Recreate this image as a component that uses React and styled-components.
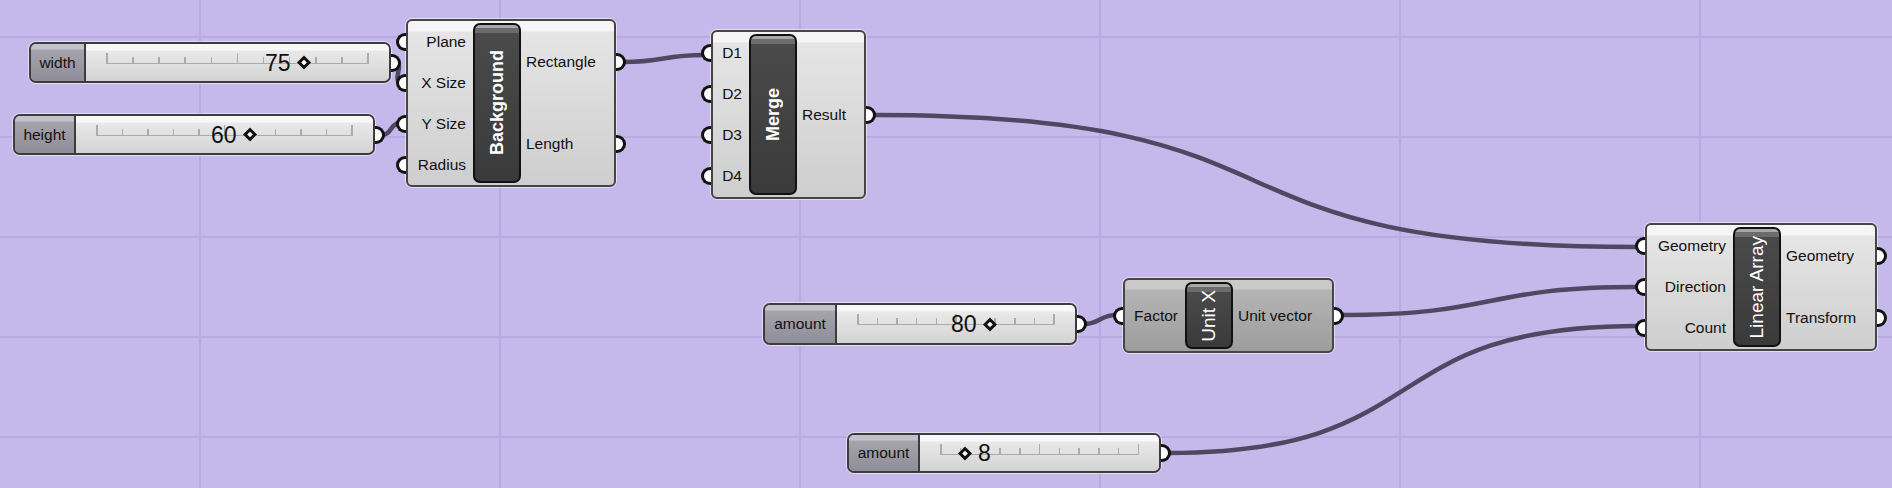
import React, { Fragment } from 'react';
import styled, { createGlobalStyle, css } from 'styled-components';

const GlobalStyle = createGlobalStyle`
  html, body {
    margin: 0;
    padding: 0;
    background: #c4b9ea;
  }

  body {
    font-family: "Liberation Sans", Arial, sans-serif;
  }

  * {
    box-sizing: border-box;
  }
`;

const Canvas = styled.div`
  position: relative;
  width: 1892px;
  height: 488px;
  overflow: hidden;
  background-color: #c4b9ea;
  background-image: linear-gradient(to right, #b7abdf 2px, transparent 2px),
    linear-gradient(to bottom, #b7abdf 2px, transparent 2px);
  background-size: 300px 100%, 100% 100px;
  background-position: 199px 0, 0 36px;
`;

const Wires = styled.svg`
  position: absolute;
  inset: 0;
  width: 100%;
  height: 100%;

  path {
    fill: none;
    stroke: #4e4862;
    stroke-width: 4.5;
    stroke-linecap: round;
  }
`;

const Grip = styled.span`
  position: absolute;
  top: 50%;
  width: 10px;
  height: 18px;
  margin-top: -9px;
  background: #fff;
  border: 3.5px solid #111;

  ${p =>
    p.$side === 'left'
      ? css`
          left: -12px;
          border-right: none;
          border-radius: 10px 0 0 10px;
        `
      : css`
          right: -12px;
          border-left: none;
          border-radius: 0 10px 10px 0;
        `}
`;

/* ---------- number sliders ---------- */

const SliderBox = styled.div`
  position: absolute;
  left: ${p => p.$x}px;
  top: ${p => p.$y}px;
  width: ${p => p.$w}px;
  height: ${p => p.$h}px;
  display: flex;
  border: 2px solid #3c3c3c;
  border-radius: 7px;
  box-shadow: 0 0 0 1px rgba(255, 255, 255, 0.5);
`;

const SliderLabel = styled.div`
  position: relative;
  width: ${p => p.$w}px;
  display: flex;
  align-items: center;
  justify-content: center;
  border-right: 2px solid #3c3c3c;
  border-radius: 5px 0 0 5px;
  background: linear-gradient(#c3c2ca 0, #c3c2ca 5px, #a5a4ad 6px, #8f8e98 100%);
  color: #111;
  font-size: 15.5px;
`;

const SliderBody = styled.div`
  position: relative;
  flex: 1;
  border-radius: 0 5px 5px 0;
  background: linear-gradient(#f8f8f8 0, #f8f8f8 6px, #e9e9e9 7px, #d3d3d3 100%);
`;

const Track = styled.div`
  position: absolute;
  left: 20px;
  right: 20px;
  top: 9px;
  height: 11px;
  display: flex;
  justify-content: space-between;
  align-items: flex-end;
  border-bottom: 1.5px solid #ababab;
`;

const Tick = styled.span`
  width: 1.5px;
  height: ${p => (p.$major ? 10 : 6)}px;
  background: #ababab;
`;

const Value = styled.div`
  position: absolute;
  left: ${p => p.$left}px;
  top: 50%;
  transform: translateY(-50%);
  display: flex;
  align-items: center;
  gap: 8px;
  color: #111;
  font-size: 23px;
  line-height: 1;
`;

const Diamond = styled.span`
  width: 10px;
  height: 10px;
  background: #fff;
  border: 3px solid #111;
  transform: rotate(45deg);
`;

/* ---------- components ---------- */

const NodeBox = styled.div`
  position: absolute;
  left: ${p => p.$x}px;
  top: ${p => p.$y}px;
  width: ${p => p.$w}px;
  height: ${p => p.$h}px;
  display: grid;
  grid-template-columns: ${p => p.$inW - 2}px 48px 1fr;
  border: 2px solid #454545;
  border-radius: 6px;
  box-shadow: 0 0 0 1px rgba(255, 255, 255, 0.5);
  background: ${p =>
    p.$dim
      ? 'linear-gradient(#c9c9c9 0, #c9c9c9 9px, #b4b4b4 10px, #9d9d9d 100%)'
      : 'linear-gradient(#f5f5f5 0, #f5f5f5 10px, #e5e5e5 11px, #cecece 100%)'};
`;

const Ports = styled.div`
  display: flex;
  flex-direction: column;
  justify-content: space-around;
  padding: ${p => (p.$side === 'left' ? '0 7px 0 0' : '0 0 0 5px')};
  text-align: ${p => (p.$side === 'left' ? 'right' : 'left')};
`;

const Port = styled.div`
  position: relative;
  height: 18px;
  line-height: 18px;
  color: #111;
  font-size: 15.5px;
  white-space: nowrap;
`;

const Bar = styled.div`
  margin: 2px 0;
  display: flex;
  align-items: center;
  justify-content: center;
  border: 2px solid #111;
  border-radius: 7px;
  background: linear-gradient(
    #a8a8a8 0,
    #a8a8a8 3px,
    #6c6c6c 3px,
    #6c6c6c 8px,
    #4a4a4a 8px,
    #3a3a3a 100%
  );
`;

const Title = styled.span`
  writing-mode: vertical-rl;
  transform: rotate(180deg);
  color: #fff;
  font-size: ${p => (p.$bold ? 18 : 19)}px;
  font-weight: ${p => (p.$bold ? 700 : 400)};
  white-space: nowrap;
`;

const sliders = [
  { label: 'width', x: 29, y: 42, w: 362, h: 41, labelW: 55, value: '75', at: 179 },
  { label: 'height', x: 13, y: 114, w: 362, h: 41, labelW: 61, value: '60', at: 135 },
  { label: 'amount', x: 763, y: 303, w: 314, h: 42, labelW: 72, value: '80', at: 114 },
  { label: 'amount', x: 847, y: 433, w: 314, h: 40, labelW: 71, value: '8', at: 40, diamondFirst: true },
];

const nodes = [
  {
    title: 'Background', bold: true, x: 406, y: 19, w: 210, h: 168, inW: 67,
    inputs: ['Plane', 'X Size', 'Y Size', 'Radius'], outputs: ['Rectangle', 'Length'],
  },
  {
    title: 'Merge', bold: true, x: 711, y: 30, w: 155, h: 169, inW: 38,
    inputs: ['D1', 'D2', 'D3', 'D4'], outputs: ['Result'],
  },
  {
    title: 'Unit X', dim: true, x: 1123, y: 278, w: 211, h: 75, inW: 62,
    inputs: ['Factor'], outputs: ['Unit vector'],
  },
  {
    title: 'Linear Array', x: 1645, y: 223, w: 232, h: 128, inW: 88,
    inputs: ['Geometry', 'Direction', 'Count'], outputs: ['Geometry', 'Transform'],
  },
];

const wires = [
  'M 397 63 C 403 66, 393 80, 400 82',
  'M 382 135 C 392 135, 390 123, 400 123',
  'M 623 62 C 665 62, 662 55, 704 55',
  'M 873 115 C 1340 115, 1170 247, 1638 247',
  'M 1084 324 C 1100 324, 1100 315, 1116 315',
  'M 1341 315 C 1500 315, 1480 287, 1638 287',
  'M 1168 453 C 1440 453, 1370 326, 1638 326',
];

const ticks = Array.from({ length: 11 }, (_, i) => i === 0 || i === 5 || i === 10);

const NumberSlider = ({ s }) => (
  <SliderBox $x={s.x} $y={s.y} $w={s.w} $h={s.h}>
    <SliderLabel $w={s.labelW}>{s.label}</SliderLabel>
    <SliderBody>
      <Track>
        {ticks.map((major, i) => (
          <Tick key={i} $major={major} />
        ))}
      </Track>
      <Value $left={s.at}>
        {s.diamondFirst && <Diamond />}
        <span>{s.value}</span>
        {!s.diamondFirst && <Diamond />}
      </Value>
      <Grip $side="right" />
    </SliderBody>
  </SliderBox>
);

const Node = ({ n }) => (
  <NodeBox $x={n.x} $y={n.y} $w={n.w} $h={n.h} $inW={n.inW} $dim={n.dim}>
    <Ports $side="left">
      {n.inputs.map(name => (
        <Port key={name}>
          {name}
          <Grip $side="left" />
        </Port>
      ))}
    </Ports>
    <Bar>
      <Title $bold={n.bold}>{n.title}</Title>
    </Bar>
    <Ports $side="right">
      {n.outputs.map(name => (
        <Port key={name}>
          {name}
          <Grip $side="right" />
        </Port>
      ))}
    </Ports>
  </NodeBox>
);

const App = () => (
  <Fragment>
    <GlobalStyle />
    <Canvas>
      <Wires viewBox="0 0 1892 488">
        {wires.map((d, i) => (
          <path key={i} d={d} />
        ))}
      </Wires>
      {sliders.map((s, i) => (
        <NumberSlider key={i} s={s} />
      ))}
      {nodes.map(n => (
        <Node key={n.title} n={n} />
      ))}
    </Canvas>
  </Fragment>
);

export default App;
